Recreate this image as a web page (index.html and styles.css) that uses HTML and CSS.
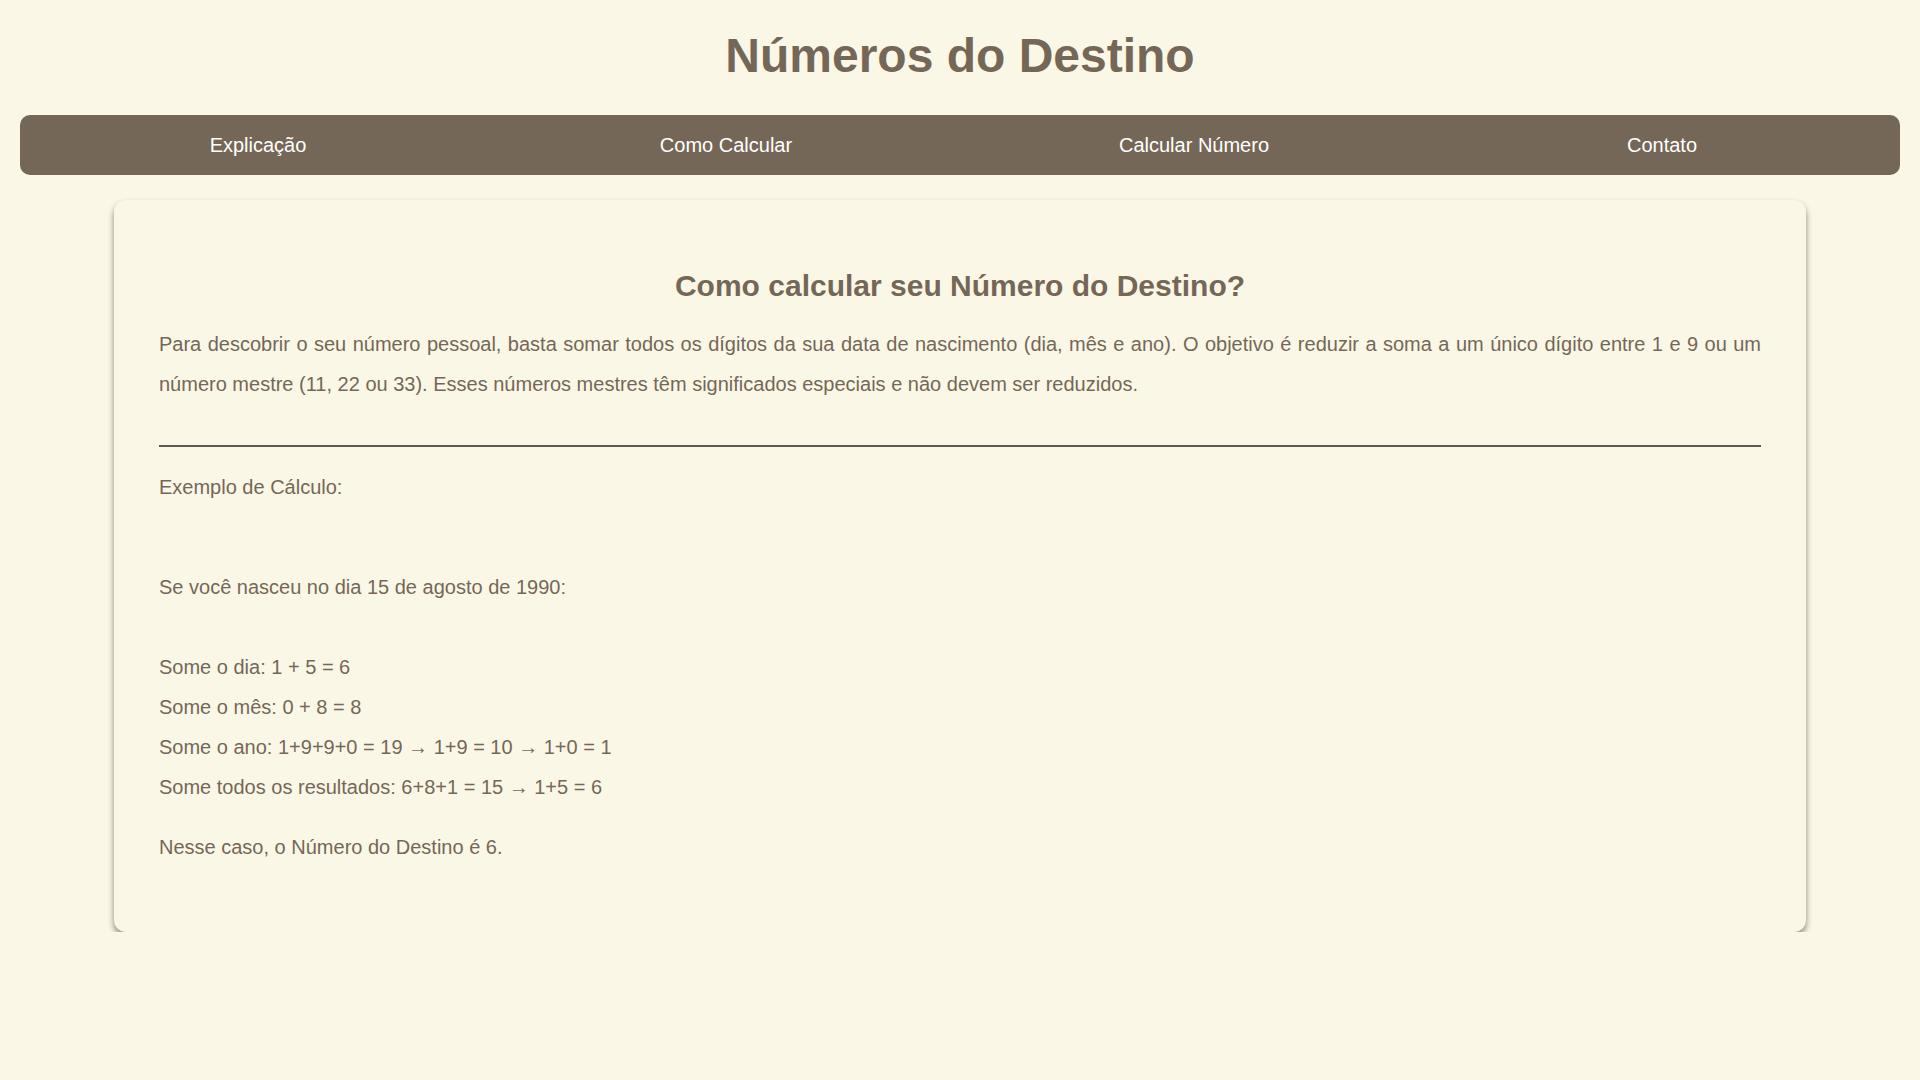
FILE: index.html
```html
<!DOCTYPE html>
<html lang="pt-BR">
<head>
<meta charset="UTF-8">
<title>Números do Destino</title>
<link rel="stylesheet" href="styles.css">
</head>
<body>
<header class="site-header">
  <h1 class="site-title">Números do Destino</h1>
</header>
<nav class="main-nav">
  <a class="nav-link" href="#explicacao">Explicação</a>
  <a class="nav-link" href="#como">Como Calcular</a>
  <a class="nav-link" href="#calcular">Calcular Número</a>
  <a class="nav-link" href="#contato">Contato</a>
</nav>
<main class="card">
  <h2 class="card-title">Como calcular seu Número do Destino?</h2>
  <p class="intro">Para descobrir o seu número pessoal, basta somar todos os dígitos da sua data de nascimento (dia, mês e ano). O objetivo é reduzir a soma a um único dígito entre 1 e 9 ou um número mestre (11, 22 ou 33). Esses números mestres têm significados especiais e não devem ser reduzidos.</p>
  <hr class="divider">
  <p class="text">Exemplo de Cálculo:<br><br></p>
  <p class="text">Se você nasceu no dia 15 de agosto de 1990:<br><br>Some o dia: 1 + 5 = 6<br>Some o mês: 0 + 8 = 8<br>Some o ano: 1+9+9+0 = 19 → 1+9 = 10 → 1+0 = 1<br>Some todos os resultados: 6+8+1 = 15 → 1+5 = 6</p>
  <p class="text">Nesse caso, o Número do Destino é 6.</p>
</main>
</body>
</html>
```
FILE: styles.css
```css
* { box-sizing: border-box; }
html, body {
  margin: 0;
  padding: 0;
  background: #fbf7e7;
}
body {
  font-family: "Liberation Sans", Arial, sans-serif;
  color: #756758;
}
.site-header {
  padding: 28px 0 32px;
  text-align: center;
}
.site-title {
  margin: 0;
  font-size: 48px;
  line-height: 55px;
  font-weight: bold;
  color: #756758;
}
.main-nav {
  display: flex;
  align-items: center;
  height: 60px;
  margin: 0 20px;
  padding: 0 4px;
  background: #756758;
  border-radius: 10px;
}
.nav-link {
  flex: 1;
  text-align: center;
  color: #ffffff;
  text-decoration: none;
  font-size: 20px;
}
.card {
  width: 1692px;
  margin: 25px auto 0;
  padding: 45px;
  background: #fbf7e7;
  border-radius: 12px;
  box-shadow: 0 4px 6px rgba(0, 0, 0, 0.45);
}
.card-title {
  margin: 24px 0 21px;
  text-align: center;
  font-size: 30px;
  line-height: 34px;
  font-weight: bold;
}
.intro, .text {
  margin: 20px 0;
  font-size: 20px;
  line-height: 40px;
}
.intro {
  text-align: justify;
}
.divider {
  margin: 41px 0 20px;
  border: none;
  border-top: 2px solid #5c5955;
  height: 0;
}
```
